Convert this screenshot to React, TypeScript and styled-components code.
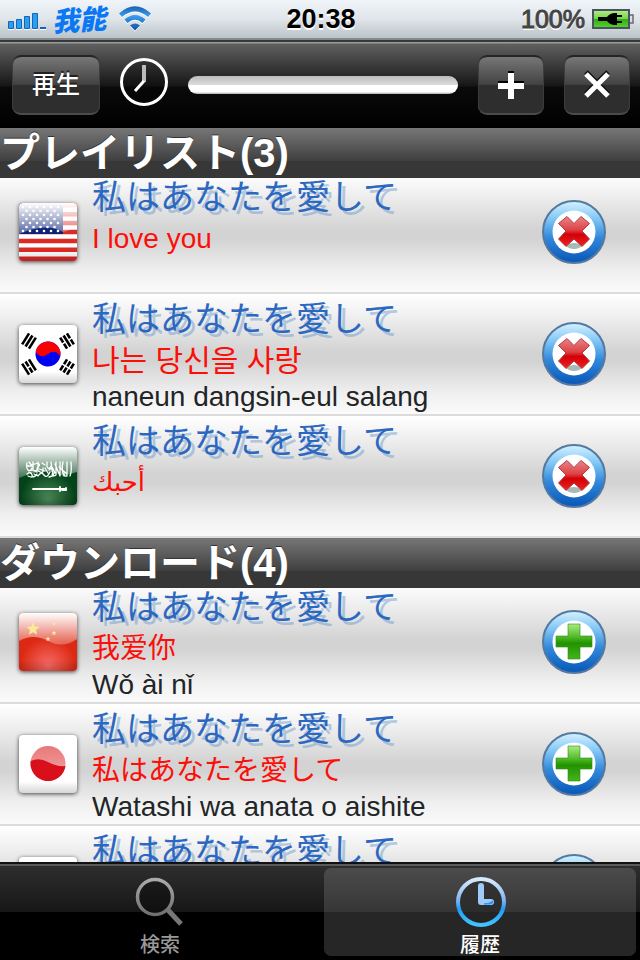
import React from "react";
import styled, { createGlobalStyle } from "styled-components";

const latin = `"Liberation Sans", "Noto Sans CJK JP", "DejaVu Sans", sans-serif`;
const japanese = `"Noto Sans CJK JP", "Liberation Sans", sans-serif`;

const GlobalStyle = createGlobalStyle`
  * { box-sizing: border-box; }
  body { margin: 0; background: #000; font-family: ${latin}; }
  button { font: inherit; border: 0; padding: 0; background: none; cursor: pointer; }
  h2, p { margin: 0; font-weight: 400; }
  ul { list-style: none; margin: 0; padding: 0; }
  svg { display: block; flex: none; }
`;

const Screen = styled.div`
  height: 100vh;
  display: flex;
  flex-direction: column;
  overflow: hidden;
`;

const StatusBar = styled.header`
  flex: none;
  height: 40px;
  display: grid;
  grid-template-columns: 1fr auto 1fr;
  align-items: center;
  padding: 0 6px 0 8px;
  background: linear-gradient(#f0f5f9, #dfe5e9 50%, #bcc4c9);
  border-bottom: 2px solid #838b8f;
`;

const Signal = styled.div`
  display: flex;
  align-items: center;
`;

const Carrier = styled.span`
  font: italic 900 27px/38px "Noto Sans CJK SC", sans-serif;
  color: #0a78f5;
  margin: 0 13px 0 5px;
  transform: rotate(-4deg);
`;

const Time = styled.time`
  font-size: 27px;
  line-height: 38px;
  font-weight: 700;
  color: #000;
  text-shadow: 0 2px 0 #fff;
`;

const Battery = styled.div`
  display: flex;
  align-items: center;
  justify-content: flex-end;
  gap: 7px;
  font-size: 25px;
  line-height: 38px;
  color: #444;
  text-shadow: 0 2px 0 #fff;
  -webkit-text-stroke: 1px #444;
`;

const Toolbar = styled.div`
  flex: none;
  height: 88px;
  display: flex;
  align-items: center;
  gap: 20px;
  padding: 0 10px 0 12px;
  border-top: 2px solid #363a3c;
  background: linear-gradient(#999 0 1px, #606060 2px, #161616 44px, #0a0a0a 45px, #000);
`;

const ClockFrame = styled.div`
  flex: none;
  padding-bottom: 6px;
`;

const ToolButton = styled.button<{ $wide?: boolean }>`
  flex: none;
  width: ${(p) => (p.$wide ? 88 : 66)}px;
  height: 60px;
  display: grid;
  place-items: center;
  border-radius: 9px;
  border-top: 2px solid #252525;
  border-bottom: 2px solid #4b4b4b;
  background: linear-gradient(#777, #414141 50%, #2e2e2e 50%);
  box-shadow: inset 1px 0 #3c3c3c, inset -1px 0 #3c3c3c;
  color: #fff;
  font: 500 24px/30px ${japanese};
  text-shadow: 0 -2px 0 #222;
`;

const ButtonLabel = styled.span`
  padding-bottom: 4px;
`;

const Track = styled.progress`
  appearance: none;
  flex: 1;
  min-width: 0;
  height: 18px;
  border: 0;
  border-radius: 9px;
  overflow: hidden;
  background: linear-gradient(#bbb, #dcdcdc 50%, #fff 50%, #fff 88%, #aaa);
  &::-webkit-progress-bar {
    background: transparent;
  }
`;

const List = styled.main`
  flex: 1;
  min-height: 0;
  overflow: hidden;
`;

const SectionTitle = styled.h2`
  position: relative;
  z-index: 1;
  height: 50px;
  margin-bottom: -6px;
  background: linear-gradient(#777, #3f3f3f 66%, #373737 67%);
  color: #fff;
  font: 700 40px/50px "Liberation Sans", "Noto Sans CJK JP", sans-serif;
  text-shadow: 0 -1px 0 #333;
  white-space: nowrap;
`;

const Phrase = styled.li`
  height: 122px;
  display: flex;
  align-items: center;
  gap: 15px;
  padding: 0 34px 0 19px;
  border-bottom: 2px solid #dcdcdc;
  background: linear-gradient(#fff, #f0f0f0 18%, #d3d3d3 48%, #d3d3d3 56%, #efefef 82%, #fafafa);
`;

const FlagFrame = styled.div`
  flex: none;
  width: 58px;
  height: 58px;
  border-radius: 4px;
  overflow: hidden;
  background: #fff;
  box-shadow: 0 1px 4px rgba(0, 0, 0, 0.7);
`;

const PhraseText = styled.div`
  flex: 1;
  min-width: 0;
  height: 120px;
  white-space: nowrap;
`;

const Source = styled.p`
  font: 400 34px/46px ${japanese};
  color: #2c68c0;
  text-shadow: 4px 4px 0 rgba(100, 145, 200, 0.45);
`;

const Translation = styled.p`
  padding-top: 2px;
  font-size: 28px;
  line-height: 37px;
  color: #fb0f08;
  &:lang(ko) {
    font-size: 30px;
  }
  &:lang(ar) {
    font-size: 26px;
  }
`;

const Reading = styled.p`
  font-size: 28px;
  line-height: 36px;
  color: #222527;
`;

const RoundButton = styled.button`
  flex: none;
  width: 64px;
  height: 64px;
  border-radius: 50%;
`;

const TabBar = styled.nav`
  flex: none;
  height: 98px;
  display: flex;
  padding: 2px 4px 4px;
  gap: 8px;
  border-top: 2px solid #111;
  background: linear-gradient(#5a5a5a 0 2px, #2e2e2e 2px, #171717 48px, #000 48px);
`;

const Tab = styled.button<{ $active?: boolean }>`
  flex: 1;
  margin-top: 2px;
  border-radius: 7px;
  display: flex;
  flex-direction: column;
  align-items: center;
  justify-content: flex-end;
  gap: 4px;
  font: 500 20px/24px ${japanese};
  color: ${(p) => (p.$active ? "#fff" : "#999")};
  background: ${(p) => (p.$active ? "linear-gradient(#4b4b4b, #363636 50%, #262626 50%)" : "none")};
`;

function SignalBars() {
  return (
    <svg width="39" height="24" viewBox="0 0 39 24" aria-label="Signal">
      <path d="M0 22.500h6M8 22.500h6M16 22.500h6M24 22.500h6M32 22.500h6" stroke="#fff" />
      <g fill="#27a0f4" stroke="#1763b5">
        <path d="M.5 14.500h5v7h-5zM8.500 12.500h5v9h-5zM16.500 9.500h5v12h-5zM24.500 6.500h5v15h-5z" />
      </g>
      <path d="M32 20h6v2h-6z" fill="#1763b5" />
    </svg>
  );
}

function Wifi() {
  return (
    <svg width="32" height="26" viewBox="0 0 32 26" aria-label="Wi-Fi">
      <defs>
        <linearGradient id="wifi" x2="0" y2="1">
          <stop stopColor="#1c5fae" />
          <stop offset=".4" stopColor="#3b9cf0" />
          <stop offset="1" stopColor="#164f9d" />
        </linearGradient>
      </defs>
      <path
        d="M0 8.500Q16-6 32 8.500l-3 3.500Q16 1 3 12ZM5.500 14.500Q16 5.500 26.500 14.500l-3 3.500Q16 11.500 8.500 18ZM11 20.500q5-4 10 0l-5 5Z"
        fill="#fff"
      />
      <path
        d="M0 7.500Q16-7 32 7.500l-3 3.500Q16 0 3 11ZM5.500 13.500Q16 4.500 26.500 13.500l-3 3.500Q16 10.500 8.500 17ZM11 19.500q5-4 10 0l-5 5Z"
        fill="url(#wifi)"
      />
    </svg>
  );
}

function BatteryIcon() {
  return (
    <svg width="42" height="21" viewBox="0 0 42 21" aria-label="Charging">
      <defs>
        <linearGradient id="cell" x2="0" y2="1">
          <stop stopColor="#b7ec8a" />
          <stop offset=".5" stopColor="#6fd643" />
          <stop offset=".52" stopColor="#37a81b" />
          <stop offset="1" stopColor="#55d827" />
        </linearGradient>
      </defs>
      <rect x="1" y="1" width="36" height="18" fill="url(#cell)" stroke="#4b5160" strokeWidth="2" />
      <path d="M38 6h3v8h-3" fill="#ddd" stroke="#666b75" strokeWidth="1.500" />
      <path d="M6 8h9q3-4 8-4h2v2h5v2h-5v4h5v2h-5v2h-2q-5 0-8-4H6Z" fill="#000" />
    </svg>
  );
}

function ToolbarClock() {
  return (
    <svg width="48" height="48" viewBox="0 0 48 48" aria-hidden="true">
      <circle cx="24" cy="24" r="22.500" fill="#000" fillOpacity=".25" stroke="#fff" strokeWidth="3" />
      <path d="M24 7v17" stroke="#bbb" strokeWidth="4" />
      <path d="M24 23l-9 10" stroke="#fff" strokeWidth="3" />
    </svg>
  );
}

function Plus() {
  return (
    <svg width="28" height="30" viewBox="0 0 28 30" aria-hidden="true">
      <path d="M11 1h6v10h10v6H17v10h-6V17H1v-6h10Z" fill="#000" />
      <path d="M11 3h6v10h10v6H17v10h-6V19H1v-6h10Z" fill="#fff" />
    </svg>
  );
}

function Cross() {
  return (
    <svg width="28" height="30" viewBox="0 0 28 30" aria-hidden="true">
      <path d="M3 2l22 22M25 2L3 24" stroke="#111" strokeWidth="5" />
      <path d="M3 4l22 22M25 4L3 26" stroke="#fff" strokeWidth="5" />
    </svg>
  );
}

function star(cx: number, cy: number, r: number) {
  return Array.from({ length: 10 }, (_, i) => {
    const a = (i * Math.PI) / 5 - Math.PI / 2;
    const d = i % 2 ? r * 0.45 : r;
    return `${cx + d * Math.cos(a)},${cy + d * Math.sin(a)}`;
  }).join(" ");
}

function UsFlag() {
  return (
    <>
      {[0, 8.9, 17.8, 26.8, 35.7, 44.6, 53.5].map((y) => (
        <path key={y} d={`M0 ${y}h58v4.500H0z`} fill="#dd2a25" />
      ))}
      <path d="M0 0h44v31H0z" fill="#0b2377" />
    </>
  );
}

function UsStars() {
  return (
    <g fill="#fff">
      {Array.from({ length: 7 }, (_, r) =>
        Array.from({ length: r % 2 ? 5 : 6 }, (_, c) => (
          <circle key={`${r}-${c}`} cx={(r % 2 ? 7.5 : 4) + c * 7} cy={4 + r * 4} r="1.300" />
        ))
      )}
    </g>
  );
}

function Trigram({ x, y, angle, breaks }: { x: number; y: number; angle: number; breaks: boolean[] }) {
  return (
    <g transform={`translate(${x} ${y}) rotate(${angle})`} stroke="#000" strokeWidth="2.600">
      {breaks.map((broken, i) => (
        <path key={i} d={broken ? `M-6.500 ${i * 4 - 4}h5.700m1.600 0h5.700` : `M-6.500 ${i * 4 - 4}h13`} />
      ))}
    </g>
  );
}

function KoreaFlag() {
  return (
    <>
      <g transform="rotate(12 29 29)">
        <circle cx="29" cy="29" r="12.500" fill="#0000f5" />
        <path d="M16.500 29a12.500 12.500 0 0 1 25 0q-6.250-7-12.500 0q-6.250 7-12.500 0Z" fill="#fa0000" />
      </g>
      <Trigram x={10} y={16} angle={-58} breaks={[false, false, false]} />
      <Trigram x={48} y={16} angle={58} breaks={[true, false, true]} />
      <Trigram x={10} y={42} angle={58} breaks={[false, true, false]} />
      <Trigram x={48} y={42} angle={-58} breaks={[true, true, true]} />
    </>
  );
}

function SaudiEmblem() {
  return (
    <g fill="none" stroke="#fff" strokeLinecap="round">
      <path
        strokeWidth="1.300"
        d="M8 16q-1 5 1 7t4-2M10 15l3 4M14 15v8q3 3 5-2v-6M8 27q4-3 5 1t5-1M19 16q3 2 0 4t2 5q4 2 3-4M23 16l3 2m2-3v5q2 3 4-1M19 29q3-5 6-1t6-3M32 15l2 14M37 15v13q-3 2-4-1M36 17l5 12M41 15v14M44 15q-2 8 1 14M48 15v14q-3 1-3-3M52 15q1 9-1 14M30 23q4-4 5 1t-5 6M10 24q5-2 8 1M12 18q4-1 7-2M40 20l8 7M8 19h5M15 27l4 2M20 22l6 2M26 21l3 5M33 20l3 6M9 29q4 2 7 0"
      />
      <path strokeWidth="1.800" d="M14 42h32M41 40v4M43 43h4v-2" />
    </g>
  );
}

type Country = "us" | "kr" | "sa" | "cn" | "jp" | "none";

function Flag({ country }: { country: Country }) {
  const glossy = country === "us" || country === "sa" || country === "cn";
  return (
    <FlagFrame>
      <svg width="58" height="58" viewBox="0 0 58 58" aria-hidden="true">
        <defs>
          <linearGradient id={`gloss-${country}`} x2="0" y2="1">
            <stop stopColor="#fff" />
            <stop offset="1" stopColor="#fff" stopOpacity={country === "us" ? 0.3 : 0.25} />
          </linearGradient>
          <radialGradient id={`glow-${country}`} cx=".5" cy=".9" r=".48">
            <stop stopColor={country === "sa" ? "#4d8a58" : "#f76b66"} />
            <stop offset="1" stopColor={country === "sa" ? "#03431a" : "#dc2913"} />
          </radialGradient>
          <linearGradient id="sun" x2="0" y2="1">
            <stop stopColor="#e97879" />
            <stop offset="1" stopColor="#f0aaaa" />
          </linearGradient>
          <linearGradient id={`edge-${country}`} x2="0" y2="1">
            <stop offset=".8" stopOpacity="0" />
            <stop offset="1" stopOpacity=".16" />
          </linearGradient>
        </defs>
        {country === "us" && <UsFlag />}
        {country === "kr" && <KoreaFlag />}
        {(country === "sa" || country === "cn") && (
          <path d="M0 0h58v58H0z" fill={`url(#glow-${country})`} />
        )}
        {country === "jp" && (
          <>
            <circle cx="29" cy="28.500" r="17.500" fill="url(#sun)" />
            <path d="M11.700 26Q20 22 29 27t17.500 4a17.500 17.500 0 0 1-34.800-5Z" fill="#d90f1c" />
          </>
        )}
        {glossy && (
          <path
            d={country === "cn" ? "M0 28q14-8 29 0t29-2V0H0Z" : "M0 31q27-12 44-2l14-4V0H0Z"}
            fill={`url(#gloss-${country})`}
          />
        )}
        {country === "us" && <UsStars />}
        {country === "sa" && <SaudiEmblem />}
        {country === "cn" && (
          <g fill="#fbe99a">
            <polygon points={star(14, 16, 7)} />
            <polygon points={star(35, 11, 2)} />
            <polygon points={star(35, 20, 2.5)} />
            <polygon points={star(29, 26, 2.5)} />
          </g>
        )}
        <path d="M0 0h58v58H0z" fill={`url(#edge-${country})`} />
      </svg>
    </FlagFrame>
  );
}

function RoundIcon({ kind }: { kind: "remove" | "add" }) {
  return (
    <svg width="64" height="64" viewBox="0 0 64 64" aria-hidden="true">
      <defs>
        <linearGradient id={`ring-${kind}`} x2="0" y2="1">
          <stop stopColor="#d5f2ff" />
          <stop offset=".28" stopColor="#83c8f7" />
          <stop offset=".6" stopColor="#3187d9" />
          <stop offset="1" stopColor="#0756b7" />
        </linearGradient>
        <linearGradient id="red" x2="0" y2="1">
          <stop stopColor="#e8868a" />
          <stop offset=".45" stopColor="#dc4245" />
          <stop offset=".6" stopColor="#d30007" />
          <stop offset="1" stopColor="#ec2424" />
        </linearGradient>
        <linearGradient id="green" x2="0" y2="1">
          <stop stopColor="#a9ec80" />
          <stop offset=".35" stopColor="#55bd2b" />
          <stop offset=".55" stopColor="#229300" />
          <stop offset="1" stopColor="#43b51d" />
        </linearGradient>
      </defs>
      <circle cx="32" cy="32" r="31" fill={`url(#ring-${kind})`} stroke="#56799f" strokeWidth="2" />
      <circle cx="32" cy="32" r="21.500" fill="#fff" />
      {kind === "add" ? (
        <path
          d="M26 14h12v12h12v11H38v12H26V37H14V26h12Z"
          fill="url(#green)"
          stroke="#31851a"
          strokeLinejoin="round"
          strokeOpacity=".6"
        />
      ) : (
        <>
          <ellipse cx="32" cy="46" rx="7" ry="3" fill="#a5bbb8" />
          <path
            d="M32 23.500l7-7 8.500 7-7.500 7.500 7.500 8-7.500 7.500-8-7.500-8 7.500-7.500-7.500 7.500-8-7.500-7.500 8.500-7Z"
            fill="url(#red)"
            stroke="#b8383d"
            strokeLinejoin="round"
          />
        </>
      )}
    </svg>
  );
}

function SearchIcon() {
  return (
    <svg width="50" height="52" viewBox="0 0 50 52" aria-hidden="true">
      <defs>
        <linearGradient id="lens" x2="0" y2="1">
          <stop stopColor="#aaa" />
          <stop offset="1" stopColor="#707070" />
        </linearGradient>
      </defs>
      <circle cx="20" cy="21" r="17.500" fill="#000" fillOpacity=".3" stroke="url(#lens)" strokeWidth="3.500" />
      <path d="M33 34l13 14" stroke="#777" strokeWidth="5" />
    </svg>
  );
}

function HistoryIcon() {
  return (
    <svg width="52" height="52" viewBox="0 0 52 52" aria-hidden="true">
      <defs>
        <linearGradient id="dial" x2="0" y2="1">
          <stop stopColor="#d8eafd" />
          <stop offset=".45" stopColor="#82b7ee" />
          <stop offset=".65" stopColor="#219bf4" />
          <stop offset="1" stopColor="#41c4fd" />
        </linearGradient>
      </defs>
      <circle cx="27" cy="26" r="23" fill="#222" fillOpacity=".5" stroke="url(#dial)" strokeWidth="4" />
      <path d="M27 10v16h10" fill="none" stroke="#9ecbf8" strokeWidth="6" strokeLinecap="round" strokeLinejoin="round" />
      <path d="M30 28q5 0 9-3 0 3-3 3Z" stroke="#2795fb" fill="#2795fb" />
    </svg>
  );
}

type Entry = { country: Country; lang: string; text: string; reading?: string };

const source = "私はあなたを愛して";

const playlist: Entry[] = [
  { country: "us", lang: "en", text: "I love you" },
  { country: "kr", lang: "ko", text: "나는 당신을 사랑", reading: "naneun dangsin-eul salang" },
  { country: "sa", lang: "ar", text: "أحبك" },
];

const downloads: Entry[] = [
  { country: "cn", lang: "zh-Hans", text: "我爱你", reading: "Wǒ ài nǐ" },
  { country: "jp", lang: "ja", text: "私はあなたを愛して", reading: "Watashi wa anata o aishite" },
  { country: "none", lang: "ja", text: "" },
];

function PhraseList({ title, items, action }: { title: string; items: Entry[]; action: "remove" | "add" }) {
  return (
    <section>
      <SectionTitle>{title}</SectionTitle>
      <ul>
        {items.map((item) => (
          <Phrase key={item.country}>
            <Flag country={item.country} />
            <PhraseText>
              <Source>{source}</Source>
              <Translation lang={item.lang}>{item.text}</Translation>
              {item.reading && <Reading>{item.reading}</Reading>}
            </PhraseText>
            <RoundButton aria-label={action === "add" ? "追加" : "削除"}>
              <RoundIcon kind={action} />
            </RoundButton>
          </Phrase>
        ))}
      </ul>
    </section>
  );
}

export default function App() {
  return (
    <Screen lang="ja">
      <GlobalStyle />
      <StatusBar>
        <Signal>
          <SignalBars />
          <Carrier>我能</Carrier>
          <Wifi />
        </Signal>
        <Time>20:38</Time>
        <Battery>
          100%
          <BatteryIcon />
        </Battery>
      </StatusBar>
      <Toolbar>
        <ToolButton $wide>
          <ButtonLabel>再生</ButtonLabel>
        </ToolButton>
        <ClockFrame>
          <ToolbarClock />
        </ClockFrame>
        <Track value={0} max={1} aria-label="再生位置" />
        <ToolButton aria-label="追加">
          <Plus />
        </ToolButton>
        <ToolButton aria-label="閉じる">
          <Cross />
        </ToolButton>
      </Toolbar>
      <List>
        <PhraseList title="プレイリスト(3)" items={playlist} action="remove" />
        <PhraseList title="ダウンロード(4)" items={downloads} action="add" />
      </List>
      <TabBar>
        <Tab>
          <SearchIcon />
          検索
        </Tab>
        <Tab $active aria-current="page">
          <HistoryIcon />
          履歴
        </Tab>
      </TabBar>
    </Screen>
  );
}
